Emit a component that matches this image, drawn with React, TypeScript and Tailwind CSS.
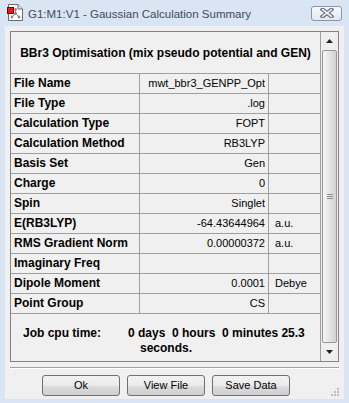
const rows: [string, string, string][] = [
  ["File Name", "mwt_bbr3_GENPP_Opt", ""],
  ["File Type", ".log", ""],
  ["Calculation Type", "FOPT", ""],
  ["Calculation Method", "RB3LYP", ""],
  ["Basis Set", "Gen", ""],
  ["Charge", "0", ""],
  ["Spin", "Singlet", ""],
  ["E(RB3LYP)", "-64.43644964", "a.u."],
  ["RMS Gradient Norm", "0.00000372", "a.u."],
  ["Imaginary Freq", "", ""],
  ["Dipole Moment", "0.0001", "Debye"],
  ["Point Group", "CS", ""],
];

function AppIcon() {
  return (
    <svg width="18" height="18" viewBox="0 0 18 18" className="shrink-0">
      <path d="M2.5 0.5 H12 L16.5 5 V16.5 H2.5 Z" fill="#ffffff" stroke="#6b6b6b" />
      <path d="M12 0.5 V5 H16.5" fill="#e4e4e4" stroke="#6b6b6b" />
      <line x1="9.5" y1="5.5" x2="9.5" y2="9.5" stroke="#8a8a8a" />
      <line x1="9.5" y1="9.5" x2="6" y2="13" stroke="#8a8a8a" />
      <line x1="9.5" y1="9.5" x2="13" y2="13" stroke="#8a8a8a" />
      <circle cx="9.5" cy="5.5" r="1.4" fill="#8a8a8a" />
      <circle cx="9.5" cy="9.5" r="1.4" fill="#8a8a8a" />
      <circle cx="6" cy="13" r="1.4" fill="#8a8a8a" />
      <circle cx="13" cy="13" r="1.4" fill="#8a8a8a" />
      <rect x="1.5" y="3.5" width="6" height="6" fill="#e21a1a" stroke="#7a0000" />
    </svg>
  );
}

function CloseGlyph() {
  return (
    <svg width="14" height="10" viewBox="0 0 14 10">
      <path d="M2.5 1.5 L11.5 8.5 M11.5 1.5 L2.5 8.5" stroke="#5f6b7c" strokeWidth="4" strokeLinecap="square" />
      <path d="M2.5 1.5 L11.5 8.5 M11.5 1.5 L2.5 8.5" stroke="#eef2f7" strokeWidth="1.6" strokeLinecap="square" />
    </svg>
  );
}

function Scrollbar() {
  return (
    <div className="flex w-[17px] flex-col bg-[#efefef]">
      <div className="flex h-[18px] items-center justify-center">
        <svg width="7" height="4" viewBox="0 0 7 4">
          <path d="M0 4 L3.5 0 L7 4 Z" fill="#222" />
        </svg>
      </div>
      <div className="ml-[1px] flex w-[15px] flex-1 items-center justify-center rounded-[2px] border border-[#979797] bg-[linear-gradient(90deg,#f6f6f6,#e6e6e6_45%,#d2d2d2)]">
        <div className="flex flex-col gap-[1px]">
          <div className="h-[1px] w-[6px] bg-[#8d8d8d]" />
          <div className="h-[1px] w-[6px] bg-[#8d8d8d]" />
          <div className="h-[1px] w-[6px] bg-[#8d8d8d]" />
        </div>
      </div>
      <div className="flex h-[18px] items-center justify-center">
        <svg width="7" height="4" viewBox="0 0 7 4">
          <path d="M0 0 L3.5 4 L7 0 Z" fill="#222" />
        </svg>
      </div>
    </div>
  );
}

function Button({ label }: { label: string }) {
  return (
    <button className="h-[21px] w-[78px] rounded-[3px] border border-[#707070] bg-[linear-gradient(#f2f2f2_0%,#ebebeb_50%,#dddddd_50%,#cfcfcf_100%)] text-[11px] leading-none text-black">
      {label}
    </button>
  );
}

export default function App() {
  return (
    <div className="flex h-[403px] w-[349px] flex-col bg-[#d9e5f3] font-['Liberation_Sans',Arial,sans-serif] text-black">
      <div className="flex h-[26px] items-center pl-[6px] pr-[7px]">
        <AppIcon />
        <span className="ml-[4px] mt-[3px] text-[11.5px] text-[#3e4a5b]">
          G1:M1:V1 - Gaussian Calculation Summary
        </span>
        <div className="ml-auto flex h-[15px] w-[31px] items-center justify-center rounded-[3px] border border-[#8797ad] bg-[linear-gradient(#f7f9fc,#e3e9f1)]">
          <CloseGlyph />
        </div>
      </div>

      <div className="mx-[5px] mb-[4px] flex flex-1 flex-col bg-[#f0f0f0]">
        <div className="mx-[5px] mt-[5px] flex h-[331px] border border-[#838383] bg-[#f0f0f0]">
          <div className="flex w-[310px] flex-col border-r border-[#a0a0a0]">
            <div className="flex h-[42px] items-center justify-center border-b border-[#a0a0a0] pt-[1px] text-[12px] font-bold">
              BBr3 Optimisation (mix pseudo potential and GEN)
            </div>
            {rows.map(([label, value, unit]) => (
              <div key={label} className="flex h-[20px] border-b border-[#a0a0a0] leading-[19px]">
                <div className="w-[129px] border-r border-[#a0a0a0] pl-[3px] text-[12px] font-bold">
                  {label}
                </div>
                <div className="w-[129px] border-r border-[#a0a0a0] pr-[3px] text-right text-[11px]">
                  {value}
                </div>
                <div className="flex-1 pl-[6px] text-[11px]">{unit}</div>
              </div>
            ))}
            <div className="flex flex-1 pl-[12px] pt-[12px] text-[12px] font-bold leading-[15px]">
              <div className="w-[105px]">Job cpu time:</div>
              <div className="flex flex-col">
                <span className="whitespace-pre">0 days  0 hours  0 minutes 25.3</span>
                <span className="ml-[12px]">seconds.</span>
              </div>
            </div>
          </div>
          <Scrollbar />
        </div>

        <div className="mx-[5px] mt-[5px] h-[2px] border-t border-[#a0a0a0] bg-white" />

        <div className="relative mt-[6px] flex flex-1 gap-[7px] pl-[37px]">
          <Button label="Ok" />
          <Button label="View File" />
          <Button label="Save Data" />
          <svg width="9" height="9" viewBox="0 0 9 9" className="absolute bottom-[3px] right-[5px]">
            <rect x="7" y="1" width="2" height="2" fill="#bdbdbd" />
            <rect x="4" y="4" width="2" height="2" fill="#bdbdbd" />
            <rect x="7" y="4" width="2" height="2" fill="#bdbdbd" />
            <rect x="1" y="7" width="2" height="2" fill="#bdbdbd" />
            <rect x="4" y="7" width="2" height="2" fill="#bdbdbd" />
            <rect x="7" y="7" width="2" height="2" fill="#bdbdbd" />
          </svg>
        </div>
      </div>
    </div>
  );
}
